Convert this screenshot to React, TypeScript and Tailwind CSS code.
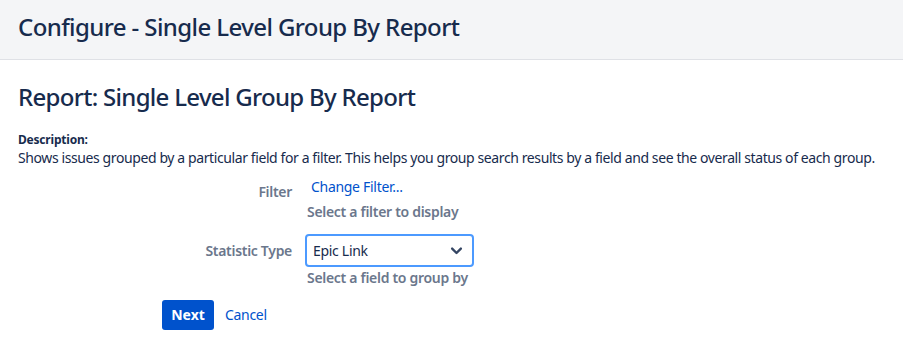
export default function App() {
  return (
    <div className="min-h-[342px] w-[903px] bg-white font-['Noto_Sans',sans-serif] text-[#172b4d]">
      {/* Page header */}
      <header className="h-[60px] border-b border-[#dfe1e6] bg-[#f4f5f7] px-[18px] flex items-center">
        <h1 className="text-[24px] leading-[28px] pb-[5px] font-medium tracking-[-0.6px]">Configure - Single Level Group By Report</h1>
      </header>

      <main className="px-[18px] pt-[23px]">
        <h2 className="text-[24px] leading-[28px] font-medium tracking-[-0.7px]">Report: Single Level Group By Report</h2>

        <div className="mt-[21px] tracking-[-0.4px]">
          <div className="text-[12px] font-bold leading-[16px] tracking-[-0.2px]">Description:</div>
          <p className="text-[14px] leading-[20px] whitespace-nowrap">
            Shows issues grouped by a particular field for a filter. This helps you group search results by a field and
            see the overall status of each group.
          </p>
        </div>

        {/* Form */}
        <div className="mt-[9px] flex flex-col text-[14px] leading-[20px] tracking-[-0.3px]">
          <div className="flex">
            <div className="w-[288px] pt-[5px] pr-[14px] text-right font-semibold text-[#6b778c]">Filter</div>
            <div className="flex flex-col pl-[1px]">
              <a href="#" className="ml-[4px] text-[#0052cc]">Change Filter...</a>
              <span className="mt-[5px] font-semibold text-[#6b778c]">Select a filter to display</span>
            </div>
          </div>

          <div className="mt-[12px] flex">
            <div className="w-[288px] pt-[7px] pr-[14px] text-right font-semibold text-[#6b778c]">Statistic Type</div>
            <div className="flex flex-col -ml-[1px]">
              <div className="flex h-[33px] w-[169px] items-center justify-between rounded-[4px] border-2 border-[#4c9aff] bg-white pl-[6px] pr-[8px]">
                <span className="text-[#172b4d]">Epic Link</span>
                <svg width="15" height="15" viewBox="0 0 24 24" fill="none" stroke="#344563" strokeWidth="3.8" strokeLinecap="round" strokeLinejoin="round">
                  <path d="M5 9l7 7 7-7" />
                </svg>
              </div>
              <span className="mt-[1px] ml-[2px] font-semibold text-[#6b778c]">Select a field to group by</span>
            </div>
          </div>

          <div className="mt-[12px] flex items-center pl-[144px]">
            <button className="h-[30px] w-[52px] rounded-[3px] bg-[#0052cc] font-bold text-white tracking-normal">Next</button>
            <a href="#" className="ml-[11px] text-[#0052cc]">Cancel</a>
          </div>
        </div>
      </main>
    </div>
  );
}
